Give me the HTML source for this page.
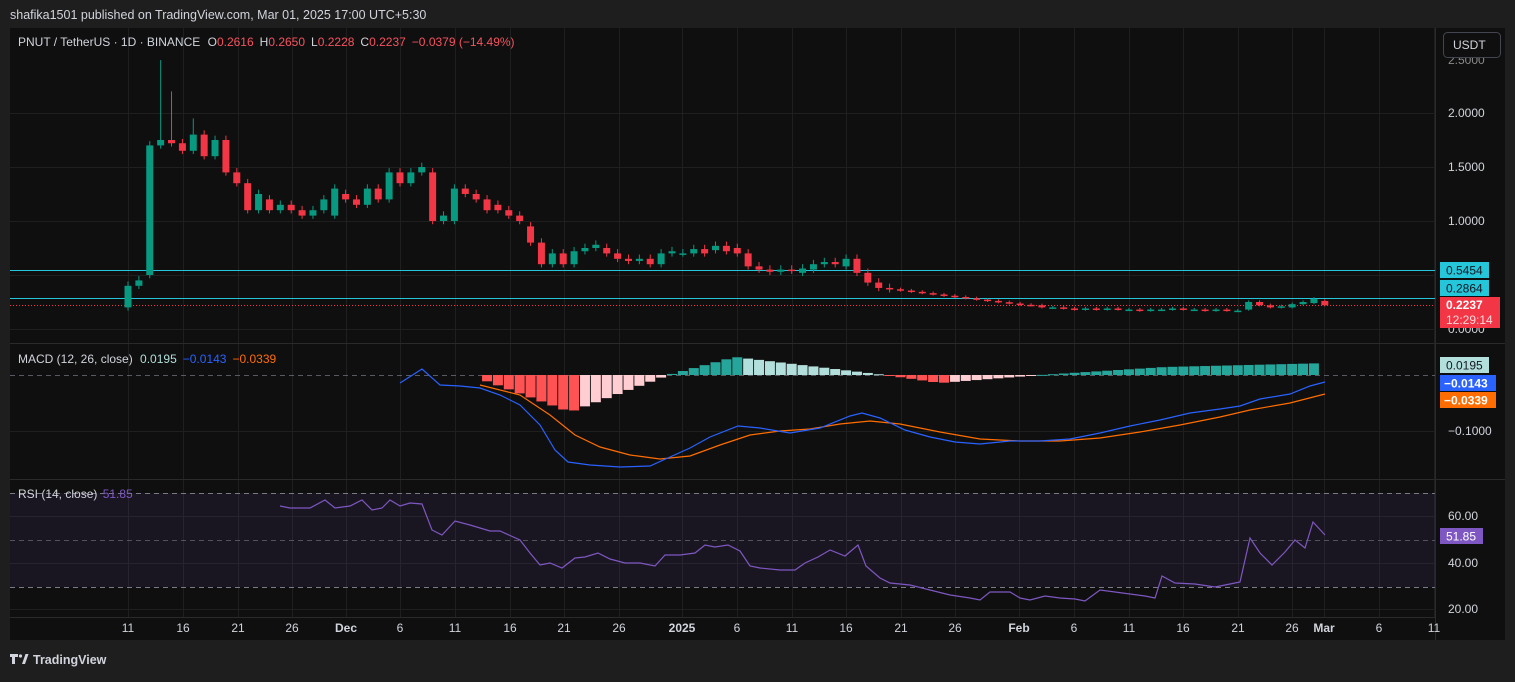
<!DOCTYPE html>
<html><head><meta charset="utf-8"><style>
body{margin:0;width:1515px;height:677px;background:#1e1e1e;overflow:hidden;font-family:"Liberation Sans",sans-serif;}
svg text{font-family:"Liberation Sans",sans-serif;}
</style></head><body>
<svg id="s" width="1515" height="677" xmlns="http://www.w3.org/2000/svg">
<rect x="0" y="0" width="1515" height="677" fill="#1e1e1e"/>
<text x="10" y="19" font-size="12.5" fill="#d1d4dc">shafika1501 published on TradingView.com, Mar 01, 2025 17:00 UTC+5:30</text>
<rect x="10" y="28" width="1495" height="612" fill="#0f0f0f"/>
<g id="grid" stroke="#1f1f1f" stroke-width="1"></g>
<line x1="10" y1="343.5" x2="1505" y2="343.5" stroke="#2a2a2a"/>
<line x1="10" y1="479.5" x2="1505" y2="479.5" stroke="#2a2a2a"/>
<line x1="1435.5" y1="28" x2="1435.5" y2="640" stroke="#2a2a2a"/>
<line x1="10" y1="617.5" x2="1435" y2="617.5" stroke="#2a2a2a"/>
<rect x="10" y="493" width="1425" height="94" fill="#7e57c2" fill-opacity="0.1"/>
<line x1="10" y1="493.5" x2="1435" y2="493.5" stroke="#787b86" stroke-dasharray="5,4"/>
<line x1="10" y1="540.5" x2="1435" y2="540.5" stroke="#787b86" stroke-opacity="0.6" stroke-dasharray="5,4"/>
<line x1="10" y1="587.5" x2="1435" y2="587.5" stroke="#787b86" stroke-dasharray="5,4"/>
<line x1="10" y1="375.5" x2="1435" y2="375.5" stroke="#787b86" stroke-opacity="0.7" stroke-dasharray="5,4"/>
<line x1="10" y1="270.5" x2="1435" y2="270.5" stroke="#26c6da"/>
<line x1="10" y1="298.5" x2="1435" y2="298.5" stroke="#26c6da"/>
<line x1="10" y1="305.5" x2="1435" y2="305.5" stroke="#f23645" stroke-dasharray="1,2"/>
<g id="cand"></g>
<g id="hist"></g>
<polyline fill="none" stroke="#ff6d00" stroke-width="1.2" points="480,385 520,395 550,415 575,435 600,447 630,455 660,459 690,456 720,445 750,435 780,431 810,429 840,424 870,421 900,424 940,432 980,439 1020,441 1060,441 1100,438 1140,432 1180,425 1220,417 1250,410 1290,403 1325,394"/>
<polyline fill="none" stroke="#2962ff" stroke-width="1.2" points="400,383 422,369 440,385 460,386 480,388 500,395 520,405 540,425 555,450 568,462 590,465 620,467 650,466 670,457 690,448 710,437 738,426 760,428 790,433 820,428 850,416 862,413 880,418 905,430 930,437 955,442 980,444 1010,441 1040,441 1070,439 1100,433 1130,426 1160,420 1190,413 1220,409 1240,406 1260,399 1290,394 1310,386 1325,382"/>
<polyline fill="none" stroke="#7e57c2" stroke-width="1.2" points="280,506 290,508 310,508 325,500 335,508 350,506 362,500 372,510 382,508 390,500 400,506 410,503 422,504 432,530 442,535 455,521 470,525 490,531 500,531 520,540 530,553 540,565 550,563 562,568 575,558 585,557 598,553 610,559 625,563 640,563 655,566 665,555 680,555 695,553 705,545 715,547 728,545 740,551 750,566 760,568 780,570 795,570 805,563 818,557 830,550 845,556 858,545 866,566 880,578 890,583 910,585 930,590 950,595 970,598 980,600 990,592 1010,592 1020,598 1030,600 1045,596 1060,598 1075,599 1085,601 1100,590 1115,592 1130,594 1145,596 1155,598 1162,576 1175,583 1195,584 1215,587 1230,584 1240,582 1250,538 1260,553 1272,565 1285,552 1295,540 1305,548 1313,522 1325,535"/>
<text x="18" y="46" font-size="12" fill="#d1d4dc">PNUT / TetherUS · 1D · BINANCE <tspan dx="4">O</tspan><tspan fill="#f7525f">0.2616</tspan><tspan dx="6">H</tspan><tspan fill="#f7525f">0.2650</tspan><tspan dx="6">L</tspan><tspan fill="#f7525f">0.2228</tspan><tspan dx="6">C</tspan><tspan fill="#f7525f">0.2237</tspan><tspan dx="6" fill="#f7525f">−0.0379 (−14.49%)</tspan></text>
<text x="18" y="363" font-size="12" fill="#d1d4dc">MACD (12, 26, close) <tspan dx="4" fill="#b2dfdb">0.0195</tspan><tspan dx="6" fill="#2962ff">−0.0143</tspan><tspan dx="6" fill="#ff6d00">−0.0339</tspan></text>
<text x="18" y="498" font-size="12" fill="#d1d4dc">RSI (14, close) <tspan dx="2" fill="#7e57c2">51.85</tspan></text>
<g font-size="12" fill="#d1d4dc">
<text x="1448" y="64" fill="#8a8a8a">2.5000</text>
<text x="1448" y="117">2.0000</text>
<text x="1448" y="171">1.5000</text>
<text x="1448" y="225">1.0000</text>
<text x="1448" y="333">0.0000</text>
<text x="1448" y="435">−0.1000</text>
<text x="1448" y="520">60.00</text>
<text x="1448" y="567">40.00</text>
<text x="1448" y="613">20.00</text>
</g>
<rect x="1440" y="262" width="49" height="16" fill="#26c6da"/><text x="1446" y="274.5" font-size="12" fill="#131722">0.5454</text>
<rect x="1440" y="280" width="49" height="16" fill="#26c6da"/><text x="1446" y="292.5" font-size="12" fill="#131722">0.2864</text>
<rect x="1440" y="297" width="60" height="31" fill="#f23645"/><text x="1446" y="309" font-size="12" font-weight="bold" fill="#fff">0.2237</text><text x="1446" y="324" font-size="12" fill="#ffd8dc">12:29:14</text>
<rect x="1440" y="357" width="49" height="16" fill="#b2dfdb"/><text x="1446" y="369.5" font-size="12" fill="#131722">0.0195</text>
<rect x="1440" y="375" width="56" height="16" fill="#2962ff"/><text x="1444" y="387.5" font-size="12" font-weight="bold" fill="#fff">−0.0143</text>
<rect x="1440" y="392" width="56" height="16" fill="#ff6d00"/><text x="1444" y="404.5" font-size="12" font-weight="bold" fill="#fff">−0.0339</text>
<rect x="1440" y="528" width="43" height="16" fill="#7e57c2"/><text x="1446" y="540.5" font-size="12" fill="#fff">51.85</text>
<rect x="1443.5" y="32.5" width="57" height="25" rx="4" fill="#0f0f0f" stroke="#434651"/><text x="1453" y="49" font-size="12" fill="#d1d4dc">USDT</text>
<g id="time" font-size="12" fill="#d1d4dc" text-anchor="middle"></g>
<g fill="#d1d4dc"><path d="M10 654h8v3h-3v7h-3v-7h-2z"/><circle cx="20.5" cy="656" r="1.6"/><path d="M22 664l3.5-10h3l-3.5 10z"/></g>
<text x="33" y="664" font-size="12.5" font-weight="bold" fill="#d1d4dc">TradingView</text>
</svg>
<script>
var NS="http://www.w3.org/2000/svg";
function el(p,t,a){var e=document.createElementNS(NS,t);for(var k in a)e.setAttribute(k,a[k]);p.appendChild(e);return e;}
var labels=[[128,"11"],[183,"16"],[238,"21"],[292,"26"],[346,"Dec"],[400,"6"],[455,"11"],[510,"16"],[564,"21"],[619,"26"],[682,"2025"],[737,"6"],[792,"11"],[846,"16"],[901,"21"],[955,"26"],[1019,"Feb"],[1074,"6"],[1129,"11"],[1183,"16"],[1238,"21"],[1292,"26"],[1324,"Mar"],[1379,"6"],[1434,"11"]];
var g=document.getElementById("grid"),tm=document.getElementById("time");
labels.forEach(function(l){el(g,"line",{x1:l[0]+.5,x2:l[0]+.5,y1:28,y2:617});var t=el(tm,"text",{x:l[0],y:632});t.textContent=l[1];if(l[1]=="Dec"||l[1]=="2025"||l[1]=="Feb"||l[1]=="Mar")t.setAttribute("font-weight","bold");});
[113,167,221,275,329,431,516,563,609].forEach(function(y){el(g,"line",{x1:10,x2:1435,y1:y+.5,y2:y+.5});});
var oc=[[.2,.4],[.4,.45],[.5,1.7],[1.7,1.75],[1.75,1.72],[1.72,1.65],[1.65,1.8],[1.8,1.6],[1.6,1.75],[1.75,1.45],[1.45,1.35],[1.35,1.1],[1.1,1.25],[1.2,1.1],[1.1,1.15],[1.15,1.1],[1.1,1.05],[1.05,1.1],[1.1,1.2],[1.05,1.3],[1.25,1.2],[1.2,1.15],[1.15,1.3],[1.3,1.2],[1.2,1.45],[1.45,1.35],[1.35,1.45],[1.45,1.5],[1.45,1.0],[1.0,1.05],[1.0,1.3],[1.3,1.25],[1.25,1.2],[1.2,1.1],[1.15,1.1],[1.1,1.05],[1.05,1.0],[.95,.8],[.8,.6],[.6,.7],[.7,.6],[.6,.72],[.72,.75],[.75,.78],[.75,.7],[.7,.65],[.65,.63],[.63,.65],[.65,.6],[.6,.7],[.7,.72],[.7,.7],[.7,.74],[.74,.7],[.73,.77],[.77,.72],[.75,.7],[.7,.58],[.58,.55],[.55,.53],[.53,.55],[.55,.54],[.52,.56],[.55,.6],[.6,.62],[.62,.6],[.58,.65],[.65,.52],[.52,.43],[.43,.38]];
var c=.38;for(var i=0;i<13;i++){var n=c-0.012;oc.push([c,n]);c=n;}
var feb=[.22,.2,.2,.19,.18,.19,.18,.19,.18,.18,.17,.18,.18,.19,.18,.18,.17,.18,.17,.17,.18,.18];
for(var i=0;i<feb.length;i++){var n=feb[i];oc.push([c,n]);c=n;}
oc=oc.slice(0,103);
oc.push([.18,.25],[.25,.22],[.22,.2],[.2,.21],[.2,.23],[.23,.25],[.24,.28],[.26,.22]);
var cg=document.getElementById("cand");
function Y(p){return 329-108*p;}
oc.forEach(function(d,i){var x=128+i*10.88,o=d[0],cl=d[1],up=cl>=o,col=up?"#089981":"#f23645";
var hi=Math.max(o,cl)+0.04,lo=Math.min(o,cl)-0.03;if(i==3)hi=2.49;if(i==6)hi=1.95;if(i==4)hi=2.2;if(i>70){hi=Math.max(o,cl)+0.015;lo=Math.min(o,cl)-0.01;}
el(cg,"line",{x1:x,x2:x,y1:Y(hi),y2:Y(lo),stroke:col});
var t=Y(Math.max(o,cl)),b=Y(Math.min(o,cl));if(b-t<1.5)b=t+1.5;
el(cg,"rect",{x:x-3.5,y:t,width:7,height:b-t,fill:col});});
var hg=document.getElementById("hist");
function H(i){var x=128+i*10.88;var h;
if(x<480)return null;
if(x<570){h=-(x-470)/100*37;}else if(x<668){h=-37*(668-x)/98;}
else if(x<735){h=(x-668)/67*18;}else if(x<885){h=18*(885-x)/150;}
else if(x<940){h=-(x-885)/55*8;}else if(x<1040){h=-8*(1040-x)/100;}
else if(x<1165){h=(x-1040)/125*8;}else{h=8+(x-1165)/165*4;}
return [x,h];}
for(var i=0;i<110;i++){var r=H(i);if(!r)continue;var x=r[0],h=r[1],prev=H(i-1),ph=prev?prev[1]:0;
var col;if(h>=0)col=(h>=ph)?"#26a69a":"#b2dfdb";else col=(h<=ph)?"#ff5252":"#ffcdd2";
var y0=375,y1=375-h;el(hg,"rect",{x:x-5,y:Math.min(y0,y1),width:10,height:Math.max(1,Math.abs(h)),fill:col});}
</script>
</body></html>
